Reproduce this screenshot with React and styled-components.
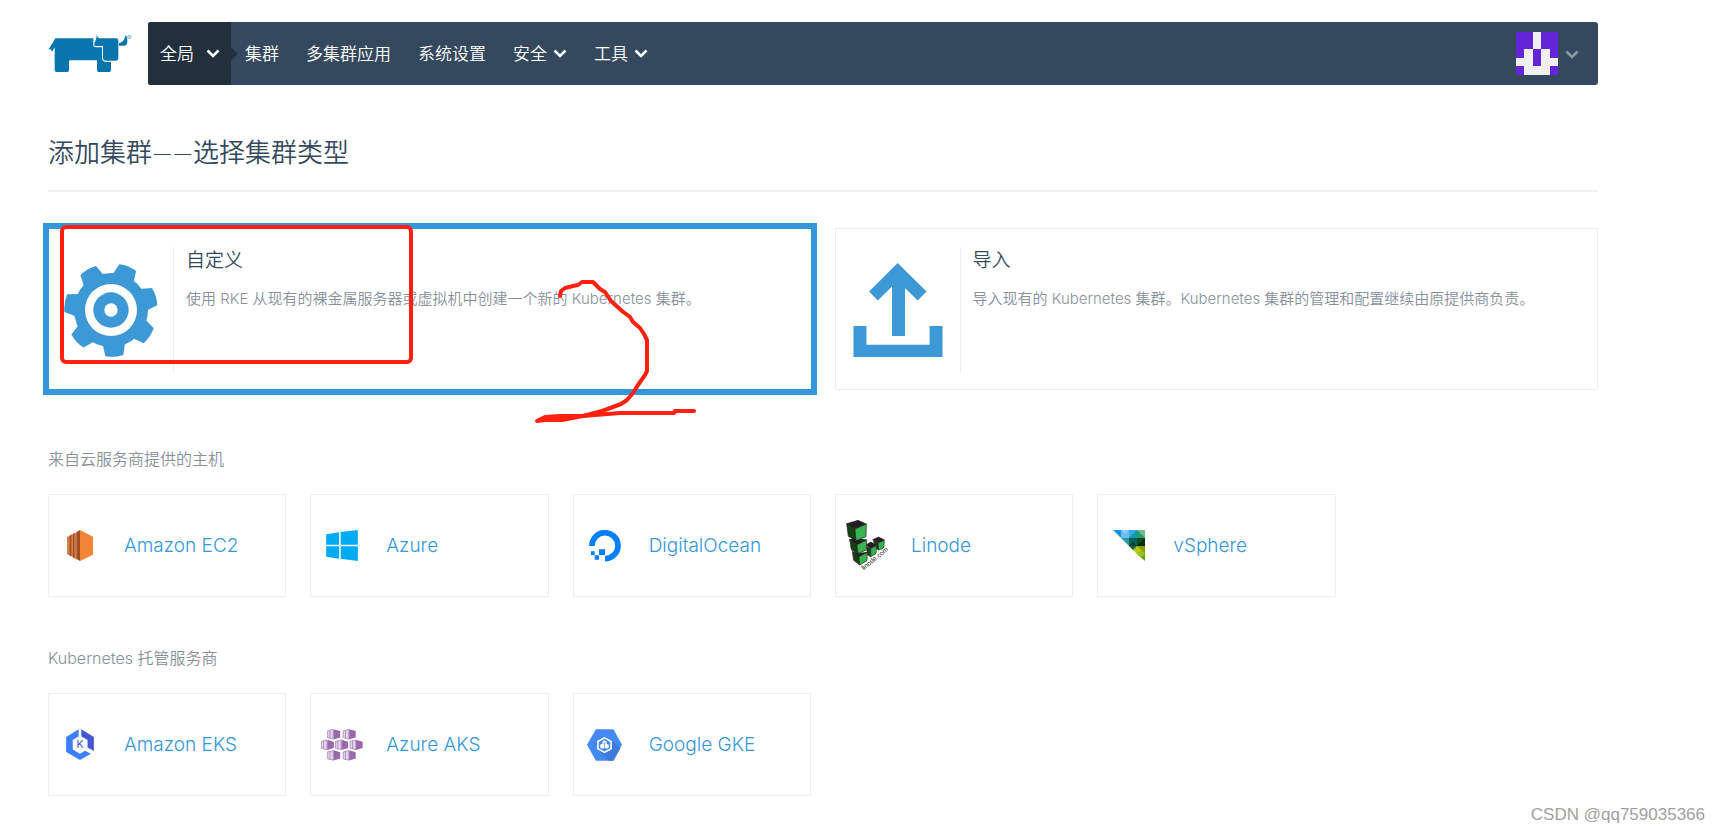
import styled, { createGlobalStyle, css } from "styled-components";

const menu = [
  { label: "集群" },
  { label: "多集群应用" },
  { label: "系统设置" },
  { label: "安全", dropdown: true },
  { label: "工具", dropdown: true },
];

const hosts = [
  { name: "Amazon EC2", Logo: Ec2Logo },
  { name: "Azure", Logo: AzureLogo },
  { name: "DigitalOcean", Logo: DigitalOceanLogo },
  { name: "Linode", Logo: LinodeLogo },
  { name: "vSphere", Logo: VsphereLogo },
];

const hosted = [
  { name: "Amazon EKS", Logo: EksLogo },
  { name: "Azure AKS", Logo: AksLogo },
  { name: "Google GKE", Logo: GkeLogo },
];

function App() {
  return (
    <Page>
      <GlobalStyle />
      <Header>
        <LogoLink href="#" aria-label="Rancher">
          <RancherLogo />
        </LogoLink>
        <Nav>
          <ScopeButton type="button">
            全局
            <Chevron />
          </ScopeButton>
          <ScopeArrow />
          <Menu>
            {menu.map(({ label, dropdown }) =>
              dropdown ? (
                <MenuButton type="button" key={label}>
                  {label}
                  <Chevron />
                </MenuButton>
              ) : (
                <MenuLink href="#" key={label}>
                  {label}
                </MenuLink>
              )
            )}
          </Menu>
          <UserButton type="button" aria-label="用户">
            <Avatar />
            <Chevron />
          </UserButton>
        </Nav>
      </Header>

      <main>
        <Title>添加集群——选择集群类型</Title>

        <Choices>
          <Choice type="button" $active>
            <ChoiceIcon>
              <GearIcon />
            </ChoiceIcon>
            <ChoiceBody>
              <ChoiceTitle>自定义</ChoiceTitle>
              <ChoiceText>
                使用 RKE 从现有的裸金属服务器或虚拟机中创建一个新的 Kubernetes 集群。
              </ChoiceText>
            </ChoiceBody>
          </Choice>
          <Choice type="button">
            <ChoiceIcon>
              <UploadIcon />
            </ChoiceIcon>
            <ChoiceBody>
              <ChoiceTitle>导入</ChoiceTitle>
              <ChoiceText>
                导入现有的 Kubernetes 集群。Kubernetes 集群的管理和配置继续由原提供商负责。
              </ChoiceText>
            </ChoiceBody>
          </Choice>
          <Marks />
        </Choices>

        <Sections>
          <ProviderSection title="来自云服务商提供的主机" providers={hosts} />
          <ProviderSection title="Kubernetes 托管服务商" providers={hosted} />
        </Sections>
      </main>

      <Watermark>CSDN @qq759035366</Watermark>
    </Page>
  );
}

export default App;

function ProviderSection({ title, providers }) {
  return (
    <section>
      <SectionTitle>{title}</SectionTitle>
      <Providers>
        {providers.map(({ name, Logo }) => (
          <Provider type="button" key={name}>
            <ProviderLogo>
              <Logo />
            </ProviderLogo>
            {name}
          </Provider>
        ))}
      </Providers>
    </section>
  );
}

function Chevron() {
  return (
    <svg width="14" height="11" viewBox="0 -2 14 11" aria-hidden="true">
      <path d="M1.500 1.500 7 7l5.500-5.500" fill="none" stroke="currentColor" strokeWidth="2.600" />
    </svg>
  );
}

function RancherLogo() {
  return (
    <svg width="84" height="39" viewBox="26 59 252 117" fill="#0875ad" aria-hidden="true">
      <path d="M48 72H162V90Q162 99 170 99H188V130Q189 143 202 143H215V168Q215 173 210 173H178Q173 173 173 168V138H92Q89 138 89 142V168Q89 173 84 173H51Q46 173 46 168V99L38 112L33 104L27 106Z" />
      <path d="M172 60C175 70 176 72 184 72H230Q237 72 237 79V130Q237 139 228 139H201Q191 139 191 130V95H171Q164 95 165 88C167 80 173 74 172 60Z" />
      <path d="M259 61C265 70 265 80 263 88Q261 94 255 94H239V86C250 85 256 76 259 61Z" />
      <circle cx="270" cy="68" r="5" fill="none" stroke="#5fa4c8" strokeWidth="2" />
      <circle cx="270" cy="68" r="2" fill="#5fa4c8" />
    </svg>
  );
}

function Avatar() {
  return (
    <svg width="42" height="43" viewBox="0 0 5 5" preserveAspectRatio="none" shapeRendering="crispEdges" aria-hidden="true">
      <path fill="#f0f0f0" d="M0 0h5v5H0z" />
      <path fill="#6425d8" d="M0 0h2v2H1v1H0zM3 0h2v3H4V2H3zM2 2h1v2H2zM0 4h1v1H0zM4 4h1v1H4z" />
    </svg>
  );
}

function GearIcon() {
  const teeth = [0, 1, 2, 3, 4, 5, 6];
  return (
    <svg width="94" height="94" viewBox="-141 -141 282 282" fill="#3d98d6" aria-hidden="true">
      {teeth.map((n) => (
        <path
          key={n}
          d="M-35-100-27-137Q0-144 27-137L33-100Z"
          transform={`rotate(${21.5 + (n * 360) / 7})`}
        />
      ))}
      <circle r="111" />
      <circle r="78" fill="#fff" />
      <circle r="53" />
      <circle r="20" fill="#fff" />
    </svg>
  );
}

function UploadIcon() {
  return (
    <svg width="94" height="94" viewBox="90 158 282 283" fill="#3d98d6" aria-hidden="true">
      <path d="M97 348h39v56h190v-56h39v93H97z" />
      <path d="M230 158l87 86-27 27-38-38v145h-39V229l-43 42-26-27z" />
    </svg>
  );
}

function Ec2Logo() {
  return (
    <svg width="26" height="31" viewBox="111 286 78 93" aria-hidden="true">
      <path fill="#d88049" d="M111 306l10-3v60l-10-4zM123 300l8-3v72l-8-4zM133 295l8-3v83l-8-5z" />
      <path fill="#9d5025" d="M119 302l5-2v65l-5-2zM129 297l5-2v76l-5-2zM140 292l10-6v93l-10-6z" />
      <path fill="#f58536" d="M150 286l39 20v54l-39 19z" />
    </svg>
  );
}

function AzureLogo() {
  return (
    <svg width="32" height="31" viewBox="888 286 96 94" fill="#00abf5" aria-hidden="true">
      <path d="M888 299l39-6v38h-39zM932 292l52-6v45h-52zM888 335h39v38l-39-6zM932 335h52v45l-52-7z" />
    </svg>
  );
}

function DigitalOceanLogo() {
  return (
    <svg width="32" height="32" viewBox="114 150 96 96" fill="#0080ff" aria-hidden="true">
      <path d="M123 198a39 39 0 1 1 39 38" fill="none" stroke="#0080ff" strokeWidth="17" />
      <path d="M144 208h18v17h-18zM120 214h11v11h-11zM131 226h13v13h-13z" />
    </svg>
  );
}

function LinodeLogo() {
  return (
    <svg width="42" height="51" viewBox="886 122 126 153" aria-hidden="true">
      <g stroke="#231f20" strokeWidth="2" strokeLinejoin="round">
        <g fill="#231f20">
          <path d="M888 133l34-10 25 11-34 15zM897 181l18-5 33 6-29 14zM905 217l20 5 25-3-25 13zM946 197l14-9 18 9-18 11zM966 181l18-8 17 9-19 9z" />
        </g>
        <g fill="#14430f">
          <path d="M888 133l25 16 3 35-23-13zM897 181l22 15 3 27-20-12zM905 217l20 15 2 25-18-14zM948 202l12 6v24l-10-6zM968 184l14 7 2 21-8-5z" />
        </g>
        <g fill="#35b44f">
          <path d="M913 149l34-15-1 38-30 12zM919 196l29-14-1 30-25 11zM925 232l25-12-1 24-22 13zM960 208l18-9-2 24-16 9zM982 191l19-8-2 23-15 6z" />
        </g>
      </g>
      <text x="939" y="273" transform="rotate(-39 939 273)" fontSize="20" fontFamily="Liberation Sans, sans-serif" fontWeight="400" fill="#231f20">
        linode.com
      </text>
    </svg>
  );
}

function VsphereLogo() {
  return (
    <svg width="32" height="31" viewBox="98 150 96 93" aria-hidden="true">
      <path fill="#1692df" d="M98 150h24v24z" />
      <path fill="#67bcf6" d="M122 150h24v24h-24z" />
      <path fill="#8acbfa" d="M122 150h24l-12 12z" />
      <path fill="#35a9ec" d="M146 150h24v24h-24z" />
      <path fill="#0f9aa5" d="M146 174l24-24v24z" />
      <path fill="#249b6b" d="M170 150h24v24h-24z" />
      <path fill="#6dc08d" d="M170 150h24v24z" />
      <path fill="#2d9a92" d="M122 174h24v24z" />
      <path fill="#0c5f59" d="M146 174h24v24h-24z" />
      <path fill="#083f3d" d="M146 198l12-12 12 12z" />
      <path fill="#104a25" d="M170 174h24v24h-24z" />
      <path fill="#062a10" d="M170 198l24-24v24z" />
      <path fill="#b4cc05" d="M146 198h48v24h-24z" />
      <path fill="#0b6b48" d="M146 198h24l-12 12z" />
      <path fill="#8c9a06" d="M170 198h24v24z" />
      <path fill="#63a00c" d="M170 222h24v21z" />
      <path fill="#97c21a" d="M170 222l12-10 12 10-12 10z" />
    </svg>
  );
}

function EksLogo() {
  return (
    <svg width="28" height="31" viewBox="108 267 84 94" aria-hidden="true">
      <path fill="#3b7ffb" d="M146 268v21l-18 11v29l22 13 15-9 18 9-33 19-42-24v-46z" />
      <path fill="#4355d3" d="M154 268l38 23v43l-19-11v-23l-19-11z" />
      <text x="150" y="325" textAnchor="middle" fontSize="32" fontFamily="Inter, sans-serif" fontWeight="400" fill="#4355d3">
        K
      </text>
    </svg>
  );
}

function AksLogo() {
  const cells = [
    [19, 0], [66, 0],
    [0, 32], [43, 32], [87, 32],
    [19, 64], [66, 64],
  ];
  return (
    <svg width="42" height="32" viewBox="0 0 127 96" aria-hidden="true">
      {cells.map(([x, y]) => (
        <g key={`${x}-${y}`} transform={`translate(${x} ${y})`}>
          <path fill="#e3d6ea" stroke="#9c72ae" strokeWidth="2" d="M1 5l17-4v29l-17-4z" />
          <path fill="#9c72ae" d="M7 4h2v23H7z" />
          <path fill="#9a69ab" d="M19 0l20 6v19l-20 6z" />
        </g>
      ))}
    </svg>
  );
}

function GkeLogo() {
  return (
    <svg width="35" height="32" viewBox="79 147 106 95" aria-hidden="true">
      <path fill="#4489f4" d="M106 147h53l26 47-26 48h-53l-27-48z" />
      <path fill="#3f7bdb" d="M153 179l27 25-21 38h-14l-34-33 42-8z" />
      <path fill="#4489f4" stroke="#fff" strokeWidth="5" d="M132 173l20 11v22l-20 11-20-11v-22z" />
      <path fill="#fff" d="M132 181l7 4v6l6 3v8l-7 4-6-3-6 3-7-4v-8l6-3v-6z" />
      <path fill="none" stroke="#4489f4" strokeWidth="2" d="M125 187l7 4 7-4M132 191v12" />
    </svg>
  );
}

function Marks() {
  return (
    <MarksLayer width="640" height="210" viewBox="58 222 640 210" aria-hidden="true">
      <rect x="62" y="227" width="349" height="135" rx="4" />
      <path d="M560 296L561 291 565 288 573 286 578 285 582 282H593L600 289 605 292 611 301 622 311 630 317 633 322 640 328 644 334 647 340V371L645 375 638 385 633 393 627 400 621 404 602 411 583 416 562 420H545L537 421 545 417 560 416 583 416 620 413H674L675 411H694" />
    </MarksLayer>
  );
}

const GlobalStyle = createGlobalStyle`
  * {
    box-sizing: border-box;
  }

  body {
    margin: 0;
    background: #fff;
    color: #34495e;
    font-family: "Inter", "Noto Sans CJK SC", sans-serif;
    font-weight: 300;
  }

  button {
    padding: 0;
    border: none;
    background: none;
    color: inherit;
    font: inherit;
    text-align: left;
    cursor: pointer;
  }

  a {
    color: inherit;
    text-decoration: none;
  }

  svg {
    display: block;
    flex: none;
  }
`;

const Page = styled.div`
  position: relative;
  min-height: 100vh;
  padding: 22px 122px 32px 48px;
`;

const Header = styled.header`
  display: flex;
`;

const LogoLink = styled.a`
  width: 100px;
  padding-top: 12px;
`;

const Nav = styled.nav`
  flex: 1;
  display: flex;
  align-items: center;
  height: 63px;
  border-radius: 3px;
  background: #34495e;
  color: #fff;
  font-size: 17px;
  font-weight: 350;
  overflow: hidden;
`;

const ScopeButton = styled.button`
  display: flex;
  align-items: center;
  gap: 12px;
  align-self: stretch;
  padding: 0 11px 2px 12px;
  background: #22303d;
`;

const ScopeArrow = styled.span`
  border: 7px solid transparent;
  border-left-color: #22303d;
  border-right: none;
`;

const Menu = styled.div`
  flex: 1;
  display: flex;
  align-items: center;
  gap: 27px;
  padding: 0 0 2px 7px;
`;

const MenuLink = styled.a``;

const MenuButton = styled.button`
  display: flex;
  align-items: center;
  gap: 6px;
`;

const UserButton = styled.button`
  display: flex;
  align-items: center;
  gap: 7px;
  padding-right: 19px;
  color: #8d99a5;
`;

const Title = styled.h1`
  margin: 47px 0 36px;
  padding-bottom: 18px;
  border-bottom: 2px solid #ecf0f1;
  font-family: "Lato", "Noto Sans CJK SC", sans-serif;
  font-size: 26px;
  font-weight: 350;
  line-height: 40px;
`;

const Choices = styled.div`
  position: relative;
  display: grid;
  grid-template-columns: 1fr 1fr;
  gap: 23px;
`;

const Choice = styled.button`
  display: flex;
  padding: 18px 17px 17px 15px;
  border: 1px solid #ecedee;
  background: #fff;

  ${({ $active }) =>
    $active &&
    css`
      border-color: #3497da;
      box-shadow: 0 0 0 5px #3497da;
    `}
`;

const ChoiceIcon = styled.span`
  display: flex;
  align-items: center;
  width: 110px;
  height: 125px;
  border-right: 1px solid #ecedee;
`;

const ChoiceBody = styled.span`
  flex: 1;
  display: flex;
  flex-direction: column;
  gap: 12px;
  padding-left: 12px;
`;

const ChoiceTitle = styled.span`
  font-size: 19px;
  font-weight: 350;
  line-height: 28px;
`;

const ChoiceText = styled.span`
  color: #87919b;
  font-size: 15px;
  font-weight: 350;
  line-height: 24px;
`;

const MarksLayer = styled.svg`
  position: absolute;
  top: -6px;
  left: 10px;
  fill: none;
  stroke: #ff2010;
  stroke-width: 4;
  stroke-linecap: round;
  stroke-linejoin: round;
  pointer-events: none;
`;

const Sections = styled.div`
  display: flex;
  flex-direction: column;
  gap: 49px;
  margin-top: 57px;
`;

const SectionTitle = styled.h2`
  margin: 0 0 23px;
  color: #87919b;
  font-size: 16px;
  font-weight: 350;
  line-height: 24px;
`;

const Providers = styled.div`
  display: grid;
  grid-template-columns: repeat(6, 1fr);
  gap: 24px;
`;

const Provider = styled.button`
  display: flex;
  align-items: center;
  gap: 13px;
  height: 103px;
  border: 1px solid #ecf0f1;
  background: #fff;
  color: #3497da;
  font-size: 19px;
`;

const ProviderLogo = styled.span`
  display: flex;
  justify-content: center;
  width: 62px;
`;

const Watermark = styled.span`
  position: absolute;
  right: 15px;
  bottom: 6px;
  color: #a0a0a0;
  font-family: "Liberation Sans", sans-serif;
  font-size: 17px;
  line-height: 24px;
`;
